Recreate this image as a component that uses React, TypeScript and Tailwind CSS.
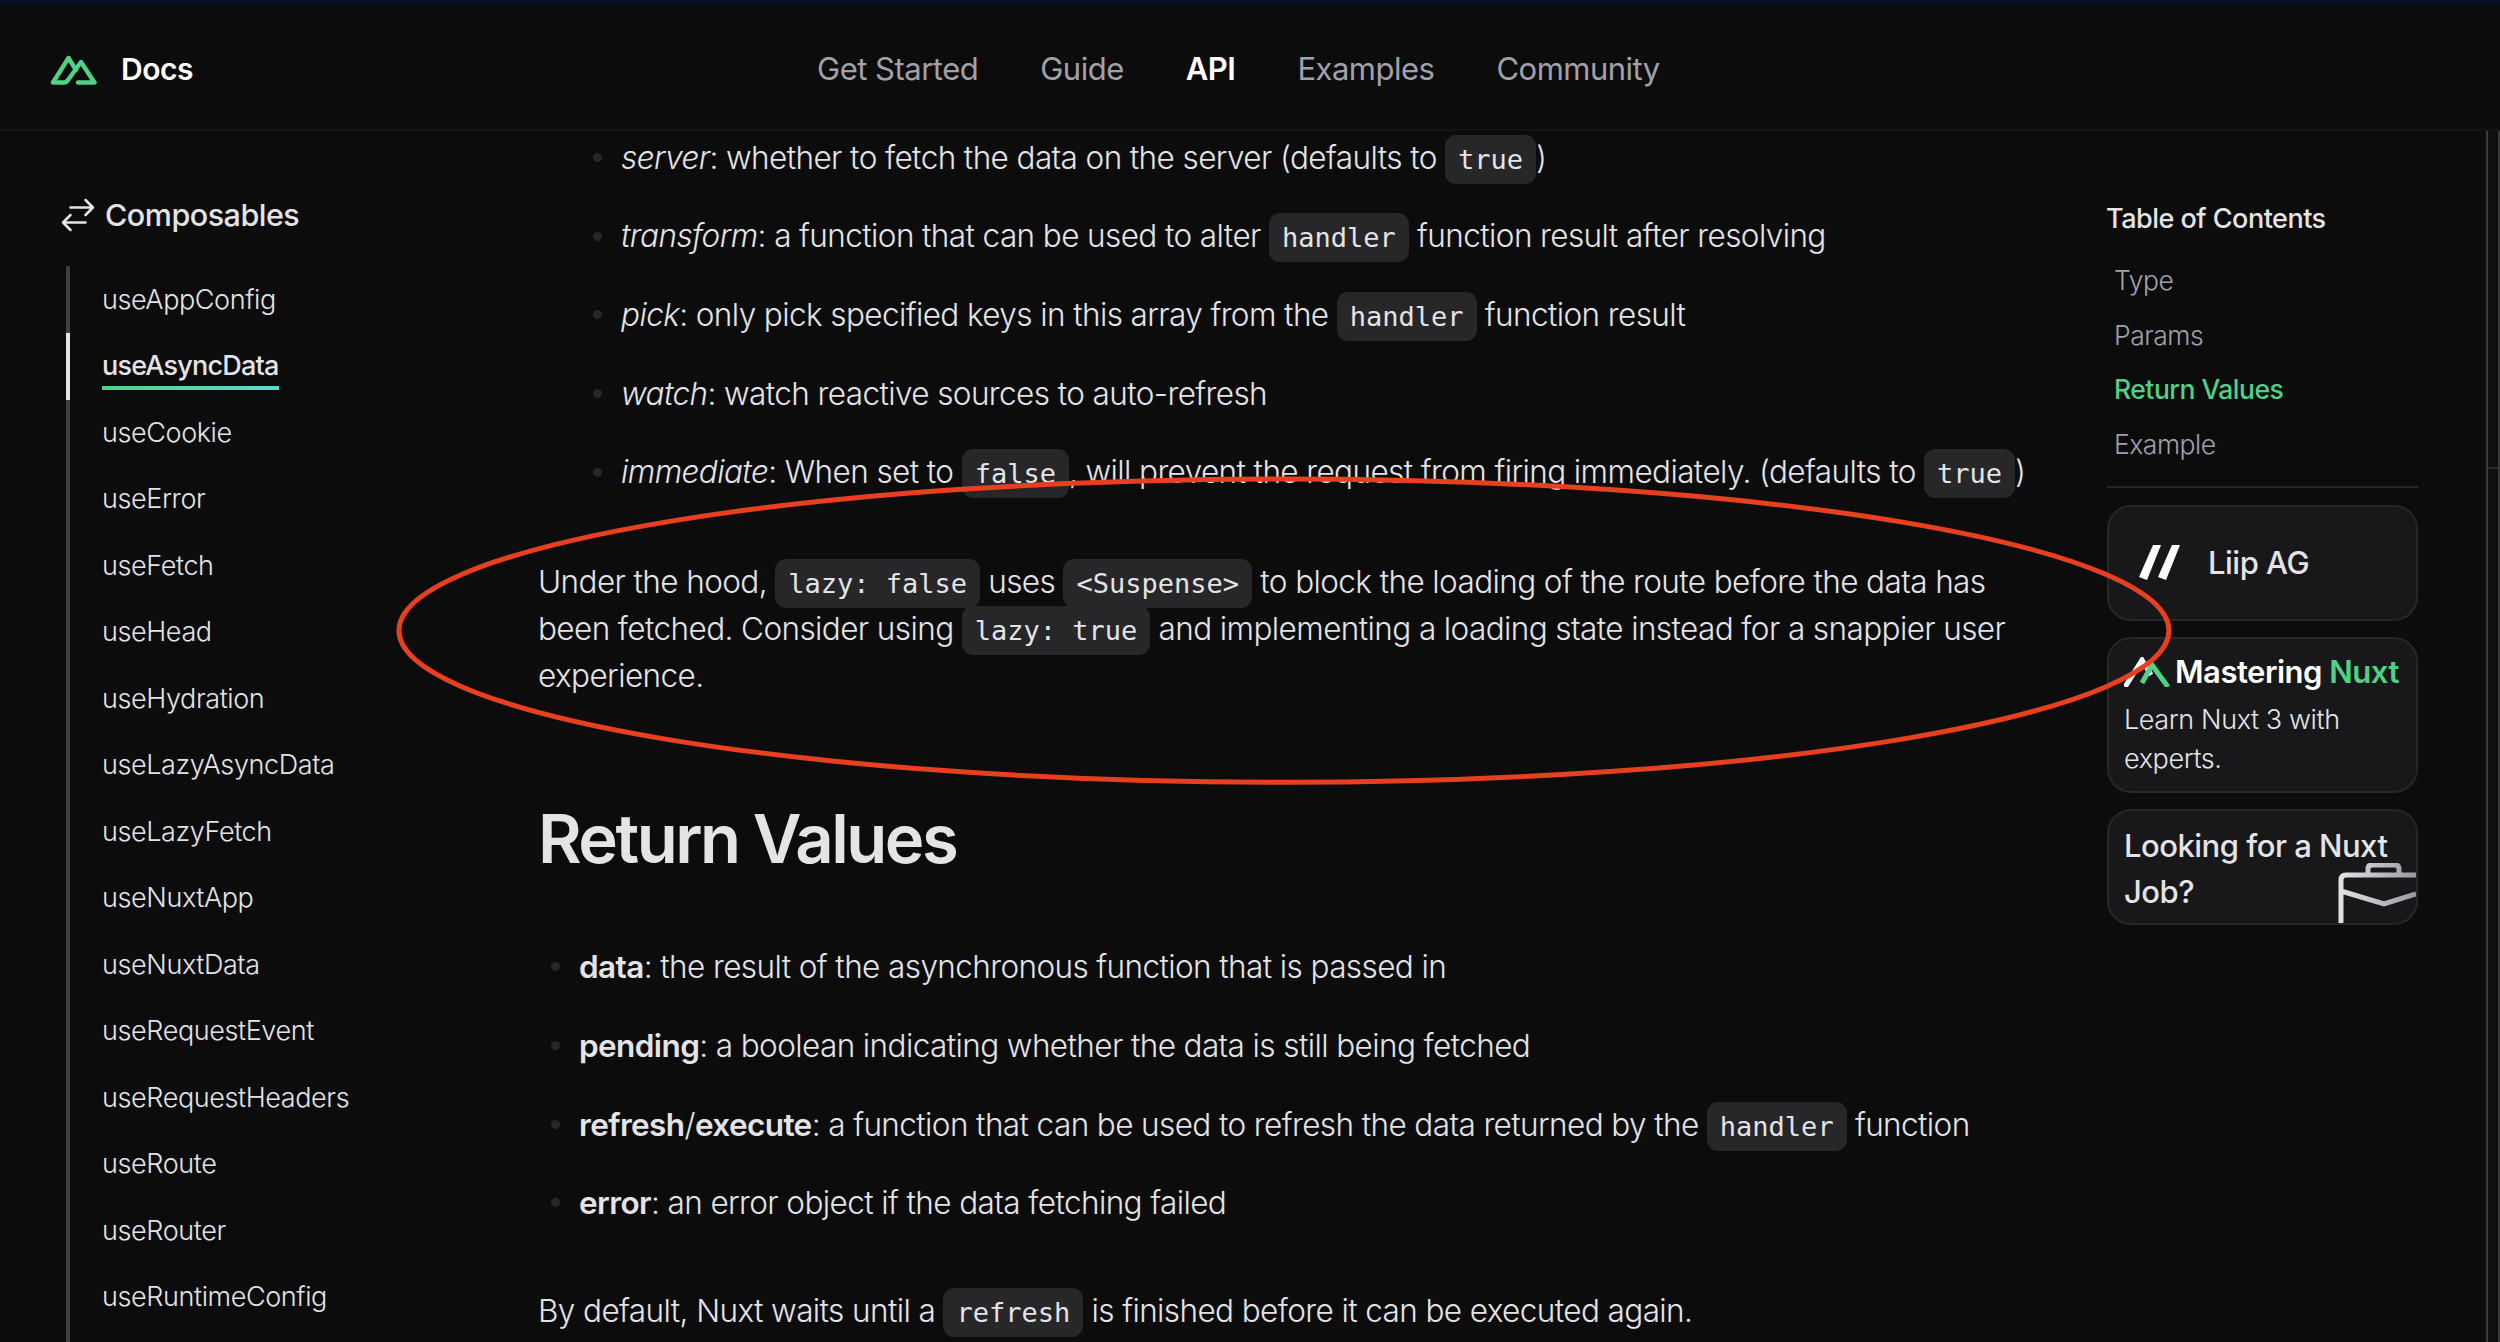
import { ReactNode } from "react";

const NAV = ["Get Started", "Guide", "API", "Examples", "Community"];
const SIDE = [
  "useAppConfig", "useAsyncData", "useCookie", "useError", "useFetch", "useHead", "useHydration",
  "useLazyAsyncData", "useLazyFetch", "useNuxtApp", "useNuxtData", "useRequestEvent",
  "useRequestHeaders", "useRoute", "useRouter", "useRuntimeConfig",
];
const TOC = ["Type", "Params", "Return Values", "Example"];

function Code({ children }: { children: ReactNode }) {
  return (
    <code className="rounded-[11px] bg-[#27272a] px-[13px] py-[9px] font-['DejaVu_Sans_Mono',monospace] text-[27px] leading-none tracking-normal text-[#e4e4e7]">
      {children}
    </code>
  );
}

function Bullet({ children, flush }: { children: ReactNode; flush?: boolean }) {
  return (
    <li className="flex h-[78.7px] items-center whitespace-pre">
      <span className={`mr-[19px] h-[9px] w-[9px] rounded-full bg-[#27272a] ${flush ? "ml-[13px]" : "ml-[55px]"}`} />
      <span>{children}</span>
    </li>
  );
}

function NuxtLogo() {
  return (
    <svg viewBox="0 0 47 31" className="h-[31px] w-[47px]" fill="none" stroke="#4fd286" strokeWidth="4.4" strokeLinejoin="round" strokeLinecap="round">
      <path d="M18.5 4 L3 28.5 H14 Q16.5 28.5 18 26 L31 8 L44.5 28.5 H28" />
      <path d="M18.5 4 L26 16" />
    </svg>
  );
}

export default function App() {
  return (
    <div className="relative flex h-[1342px] w-[2500px] flex-col overflow-hidden border-t-[3px] border-[#0b1033] bg-[#0c0c0d] font-['Inter',sans-serif] text-[#e4e4e7]">
      {/* Header */}
      <header className="flex h-[128px] shrink-0 items-center border-b-2 border-[#141416] pt-[6px] pl-[50px]">
        <div className="flex w-[767px] items-center gap-[24px]">
          <NuxtLogo />
          <span className="text-[30px] font-semibold tracking-[-0.5px] text-white">Docs</span>
        </div>
        <nav className="flex gap-[62px] text-[31px] tracking-[-0.5px] text-[#a1a1aa]">
          {NAV.map((n) => (
            <span key={n} className={n === "API" ? "font-semibold text-white" : ""}>{n}</span>
          ))}
        </nav>
      </header>

      <div className="flex min-h-0 flex-1">
        {/* Sidebar */}
        <aside className="flex w-[538px] shrink-0 flex-col pt-[61px] pl-[62px]">
          <div className="flex items-center gap-[7px] text-[30.5px] font-medium tracking-[-0.5px]">
            <svg viewBox="0 0 24 24" className="-ml-[4px] h-[40px] w-[40px]" fill="none" stroke="#e4e4e7" strokeWidth="1.5" strokeLinecap="round" strokeLinejoin="round">
              <path d="M7.5 21 3 16.5m0 0L7.5 12M3 16.5h13.5m0-13.5L21 7.5m0 0L16.5 12M21 7.5H7.5" />
            </svg>
            <span>Composables</span>
          </div>
          <ul className="mt-[28px] ml-[4px] flex flex-1 flex-col border-l-4 border-[#3f3f46] py-[1px]">
            {SIDE.map((s) => (
              <li key={s} className={`-ml-[4px] flex h-[66.5px] shrink-0 items-center border-l-4 pl-[32px] text-[27px] ${s === "useAsyncData" ? "border-[#e4e4e7] font-medium tracking-[-0.8px]" : "border-transparent font-light tracking-[-0.4px]"}`}>
                {s === "useAsyncData" ? (
                  <span className="relative">
                    {s}
                    <span className="absolute right-0 -bottom-[3px] left-0 h-[4px] bg-gradient-to-r from-[#4fd286] to-[#5fd8d0]" />
                  </span>
                ) : s}
              </li>
            ))}
          </ul>
        </aside>

        {/* Content */}
        <main className="w-[1569px] shrink-0 text-[31.5px] font-light tracking-[-0.6px] text-[#e4e4e7]">
          <ul className="mt-[-13px]">
            <Bullet><em>server</em>: whether to fetch the data on the server (defaults to <Code>true</Code>)</Bullet>
            <Bullet><em>transform</em>: a function that can be used to alter <Code>handler</Code> function result after resolving</Bullet>
            <Bullet><em>pick</em>: only pick specified keys in this array from the <Code>handler</Code> function result</Bullet>
            <Bullet><em>watch</em>: watch reactive sources to auto-refresh</Bullet>
            <Bullet><em>immediate</em>: When set to <Code>false</Code>, will prevent the request from firing immediately. (defaults to <Code>true</Code>)</Bullet>
          </ul>
          <p className="mt-[47px] w-[1500px] leading-[47px]">
            Under the hood, <Code>lazy: false</Code> uses <Code>&lt;Suspense&gt;</Code> to block the loading of the route before the data has been fetched. Consider using <Code>lazy: true</Code> and implementing a loading state instead for a snappier user experience.
          </p>
          <h2 className="mt-[100px] text-[67px] leading-[80px] font-semibold tracking-[-2.5px]">Return Values</h2>
          <ul className="mt-[48px]">
            <Bullet flush><strong className="font-semibold">data</strong>: the result of the asynchronous function that is passed in</Bullet>
            <Bullet flush><strong className="font-semibold">pending</strong>: a boolean indicating whether the data is still being fetched</Bullet>
            <Bullet flush><strong className="font-semibold">refresh</strong>/<strong className="font-semibold">execute</strong>: a function that can be used to refresh the data returned by the <Code>handler</Code> function</Bullet>
            <Bullet flush><strong className="font-semibold">error</strong>: an error object if the data fetching failed</Bullet>
          </ul>
          <p className="mt-[45px] leading-[47px]">
            By default, Nuxt waits until a <Code>refresh</Code> is finished before it can be executed again.
          </p>
        </main>

        {/* Right column */}
        <aside className="w-[311px] shrink-0 pt-[68px]">
          <h3 className="-ml-[1px] text-[27px] font-medium tracking-[-0.5px]">Table of Contents</h3>
          <ul className="mt-[14px] border-b-2 border-[#27272a] pb-[14px] pl-[7px] text-[26.5px] font-light tracking-[-0.5px] text-[#a1a1aa]">
            {TOC.map((t) => (
              <li key={t} className={`flex h-[54.6px] items-center ${t === "Return Values" ? "font-medium text-[#4fd286]" : ""}`}>{t}</li>
            ))}
          </ul>
          <div className="mt-[17px] flex flex-col gap-[16px]">
            <div className="flex h-[116px] items-center gap-[27px] rounded-[24px] border-2 border-[#27272a] bg-[#18181b] pl-[30px]">
              <svg viewBox="0 0 42 36" className="h-[36px] w-[42px]" fill="#ffffff">
                <path d="M0 32 L14 0 H22 L8 35 Z" />
                <path d="M19 32 L33 0 H41 L27 35 Z" />
              </svg>
              <span className="text-[31px] font-medium tracking-[-0.5px]">Liip AG</span>
            </div>
            <div className="flex h-[156px] flex-col rounded-[24px] border-2 border-[#27272a] bg-[#18181b] px-[15px] pt-[10px]">
              <div className="flex items-center gap-[5px] text-[31px] font-semibold tracking-[-0.5px] text-white">
                <svg viewBox="0 0 46 30" className="h-[30px] w-[46px]" fill="none" strokeWidth="5">
                  <path d="M1 30 L18 3 L27 18" stroke="#ffffff" />
                  <path d="M18 26 L28 8 L44 30" stroke="#4fd286" />
                </svg>
                <span>Mastering <span className="text-[#4fd286]">Nuxt</span></span>
              </div>
              <p className="mt-[5px] text-[27px] leading-[39px] font-light tracking-[-0.4px]">Learn Nuxt 3 with experts.</p>
            </div>
            <div className="relative h-[116px] overflow-hidden rounded-[24px] border-2 border-[#27272a] bg-[#18181b] px-[15px] pt-[12px] text-[31px] leading-[46px] font-medium tracking-[-0.5px]">
              <p>Looking for a Nuxt Job?</p>
              <svg viewBox="0 0 78 60" className="absolute right-0 bottom-0 h-[60px] w-[78px]" fill="none" stroke="url(#case)" strokeWidth="5">
                <defs>
                  <linearGradient id="case" gradientUnits="userSpaceOnUse" x1="0" y1="0" x2="78" y2="0">
                    <stop offset="0" stopColor="#e4e4e7" />
                    <stop offset="1" stopColor="#9a9aa2" />
                  </linearGradient>
                </defs>
                <path d="M3 60 V17 Q3 12 8 12 H78" />
                <path d="M30 12 V6 Q30 2 34 2 H57 Q61 2 61 6 V12" />
                <path d="M3 28 L46 41 L78 31" />
              </svg>
            </div>
          </div>
        </aside>

        {/* Scrollbar strip at the window edge */}
        <div className="ml-[68px] flex-1 border-x-2 border-[#3a3a3c] bg-[#0f1013] pt-[336px]">
          <div className="h-[2px] bg-[#2a2a2d]" />
        </div>
      </div>

      {/* Red annotation drawn over the page */}
      <svg className="pointer-events-none absolute inset-0 h-full w-full" viewBox="0 0 2500 1342" fill="none">
        <ellipse cx="1284" cy="629" rx="887" ry="152" stroke="#e8401f" strokeWidth="5" />
      </svg>
    </div>
  );
}
